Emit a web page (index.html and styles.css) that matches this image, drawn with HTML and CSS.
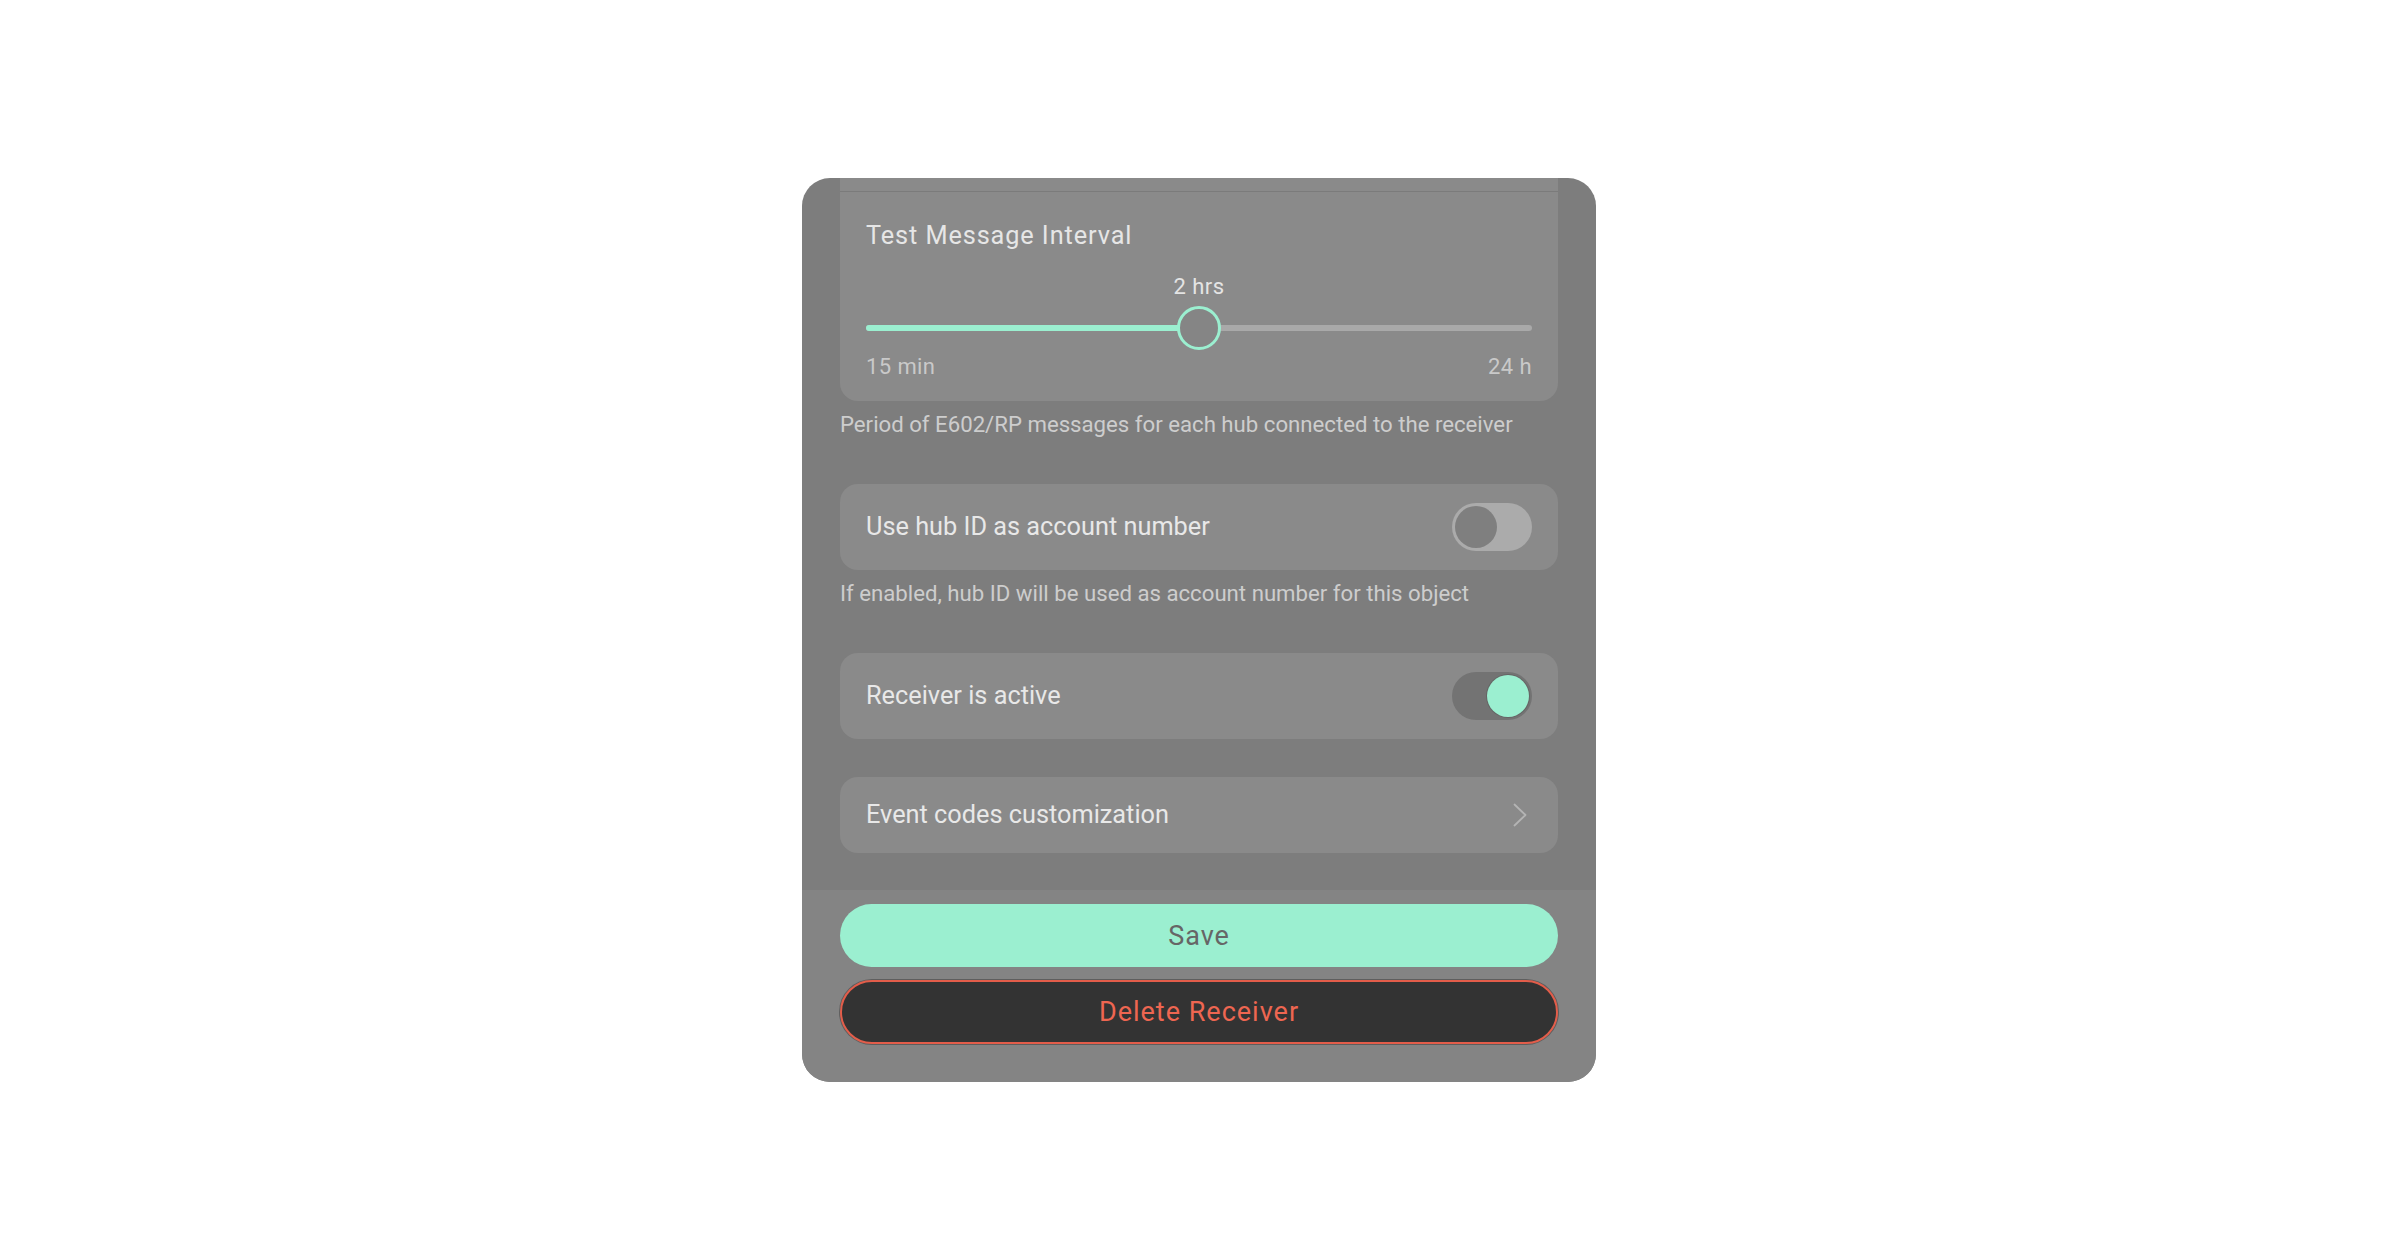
FILE: index.html
```html
<!DOCTYPE html>
<html lang="en">
<head>
<meta charset="utf-8">
<title>Receiver settings</title>
<link rel="stylesheet" href="styles.css">
</head>
<body>
<div class="page">
  <div class="panel">
    <div class="scroll">
      <section class="group">
        <div class="card card-top">
          <div class="prev-row"></div>
          <div class="slider-row">
            <div class="title">Test Message Interval</div>
            <div class="slider">
              <div class="slider-value-line"><span class="slider-value" style="left:50%">2 hrs</span></div>
              <div class="slider-track-wrap">
                <div class="track"><div class="track-fill" style="width:50%"></div></div>
                <div class="thumb" style="left:50%"></div>
              </div>
              <div class="slider-limits"><span>15 min</span><span>24 h</span></div>
            </div>
          </div>
        </div>
        <p class="help">Period of E602/RP messages for each hub connected to the receiver</p>
      </section>

      <section class="group">
        <div class="card card-row">
          <span class="label">Use hub ID as account number</span>
          <span class="toggle toggle-off"><span class="knob"></span></span>
        </div>
        <p class="help">If enabled, hub ID will be used as account number for this object</p>
      </section>

      <section class="group">
        <div class="card card-row">
          <span class="label">Receiver is active</span>
          <span class="toggle toggle-on"><span class="knob"></span></span>
        </div>
      </section>

      <section class="group">
        <div class="card card-link">
          <span class="label">Event codes customization</span>
          <svg class="chevron" width="14" height="24" viewBox="0 0 14 24" aria-hidden="true">
            <polyline points="1.5,1.5 12.5,12 1.5,22.5" fill="none" stroke="#b4b4b4" stroke-width="1.8" stroke-linecap="round" stroke-linejoin="round"/>
          </svg>
        </div>
      </section>
    </div>
    <div class="footer">
      <button class="btn btn-save">Save</button>
      <button class="btn btn-delete">Delete Receiver</button>
    </div>
  </div>
</div>
</body>
</html>
```
FILE: styles.css
```css
html, body {
  margin: 0;
  padding: 0;
  background: #ffffff;
}

body {
  font-family: Roboto, "Liberation Sans", sans-serif;
}

.page {
  min-height: 100vh;
  display: flex;
  align-items: center;
  justify-content: center;
}

.panel {
  width: 794px;
  margin-right: 2px;
  background: #7d7d7d;
  border-radius: 28px;
  overflow: hidden;
  display: flex;
  flex-direction: column;
}

.scroll {
  padding: 0 38px 37px;
  display: flex;
  flex-direction: column;
  gap: 38px;
}

.group {
  display: flex;
  flex-direction: column;
}

.card {
  background: #8a8a8a;
  border-radius: 18px;
}

.card-top {
  border-radius: 0 0 18px 18px;
}

.prev-row {
  height: 13px;
  border-bottom: 1px solid #7b7b7b;
}

.slider-row {
  padding: 30px 26px 22px 26px;
}

.title {
  font-size: 25.3px;
  line-height: 28px;
  color: #e6e6e6;
  letter-spacing: 0.9px;
}

.slider {
  margin-top: 25px;
}

.slider-value-line {
  position: relative;
  height: 24px;
}

.slider-value {
  position: absolute;
  top: 0;
  transform: translateX(-50%);
  font-size: 22px;
  line-height: 24px;
  letter-spacing: 0.5px;
  color: #e4e4e4;
  white-space: nowrap;
}

.slider-track-wrap {
  position: relative;
  height: 44px;
  margin-top: 7px;
  display: flex;
  align-items: center;
}

.track {
  flex: 1;
  height: 6px;
  border-radius: 3px;
  background: #a9a9a9;
  overflow: hidden;
}

.track-fill {
  height: 100%;
  background: #9befd0;
}

.thumb {
  position: absolute;
  top: 0;
  width: 44px;
  height: 44px;
  box-sizing: border-box;
  border: 3px solid #9befd0;
  border-radius: 50%;
  background: #858585;
  transform: translateX(-50%);
}

.slider-limits {
  display: flex;
  justify-content: space-between;
  margin-top: 5px;
  font-size: 22px;
  line-height: 24px;
  letter-spacing: 0.4px;
  color: #c9c9c9;
}

.help {
  margin: 11px 0 10px;
  font-size: 22.2px;
  line-height: 24px;
  color: #cdcdcd;
}

.card-row {
  display: flex;
  align-items: center;
  justify-content: space-between;
  padding: 19px 26px 19px 26px;
}

.card-link {
  display: flex;
  align-items: center;
  justify-content: space-between;
  padding: 24px 26px 24px 26px;
}

.label {
  font-size: 25.3px;
  line-height: 28px;
  color: #e8e8e8;
}

.toggle {
  width: 80px;
  height: 48px;
  box-sizing: border-box;
  padding: 3px;
  border-radius: 24px;
  display: flex;
}

.toggle .knob {
  width: 42px;
  height: 42px;
  border-radius: 50%;
}

.toggle-off {
  background: #ababab;
  justify-content: flex-start;
}

.toggle-off .knob {
  background: #7f7f7f;
}

.toggle-on {
  background: #737373;
  justify-content: flex-end;
}

.toggle-on .knob {
  background: #9befd0;
  box-shadow: 0 0 0 1px rgba(0, 0, 0, 0.12);
}

.chevron {
  display: block;
  margin-right: 5px;
}

.footer {
  background: #848484;
  padding: 14px 38px 38px;
  display: flex;
  flex-direction: column;
  gap: 13px;
}

.btn {
  display: block;
  width: 100%;
  border: none;
  border-radius: 32px;
  font-family: Roboto, "Liberation Sans", sans-serif;
  font-size: 27px;
  letter-spacing: 1px;
  cursor: pointer;
}

.btn-save {
  height: 63px;
  background: #9befd0;
  color: #666666;
}

.btn-delete {
  height: 64px;
  background: #333333;
  color: #ee6651;
  border: 2px solid #e35d4a;
  box-shadow: 0 0 0 1px #5e5e5e;
}
```
